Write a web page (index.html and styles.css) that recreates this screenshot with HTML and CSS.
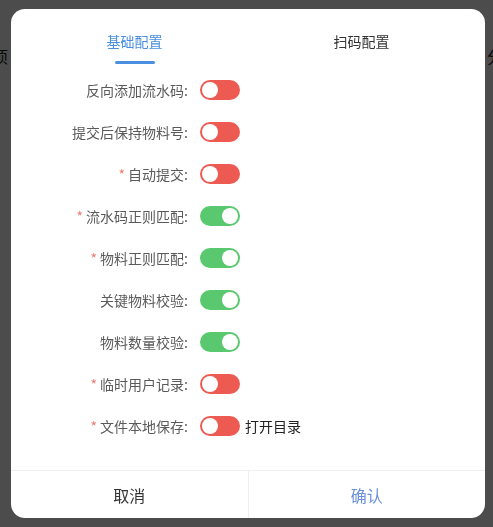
FILE: index.html
```html
<!DOCTYPE html>
<html lang="zh-CN">
<head>
    <meta charset="UTF-8">
    <meta name="viewport" content="width=device-width, initial-scale=1.0">
    <title>配置</title>
    <link rel="stylesheet" href="styles.css">
</head>
<body>
    <div class="page-behind">
        <span class="behind-left">项</span>
        <span class="behind-right">分</span>
    </div>

    <div class="overlay">
        <div class="dialog">
            <div class="tabs">
                <div class="tab active">
                    <span>基础配置</span>
                    <i class="tab-line"></i>
                </div>
                <div class="tab">
                    <span>扫码配置</span>
                    <i class="tab-line"></i>
                </div>
            </div>

            <div class="form">
                <div class="row">
                    <label class="row-label">反向添加流水码:</label>
                    <span class="switch off"><i class="knob"></i></span>
                </div>
                <div class="row">
                    <label class="row-label">提交后保持物料号:</label>
                    <span class="switch off"><i class="knob"></i></span>
                </div>
                <div class="row">
                    <label class="row-label"><em class="req">*</em>自动提交:</label>
                    <span class="switch off"><i class="knob"></i></span>
                </div>
                <div class="row">
                    <label class="row-label"><em class="req">*</em>流水码正则匹配:</label>
                    <span class="switch on"><i class="knob"></i></span>
                </div>
                <div class="row">
                    <label class="row-label"><em class="req">*</em>物料正则匹配:</label>
                    <span class="switch on"><i class="knob"></i></span>
                </div>
                <div class="row">
                    <label class="row-label">关键物料校验:</label>
                    <span class="switch on"><i class="knob"></i></span>
                </div>
                <div class="row">
                    <label class="row-label">物料数量校验:</label>
                    <span class="switch on"><i class="knob"></i></span>
                </div>
                <div class="row">
                    <label class="row-label"><em class="req">*</em>临时用户记录:</label>
                    <span class="switch off"><i class="knob"></i></span>
                </div>
                <div class="row">
                    <label class="row-label"><em class="req">*</em>文件本地保存:</label>
                    <span class="switch off"><i class="knob"></i></span>
                    <span class="open-dir">打开目录</span>
                </div>
            </div>

            <div class="footer">
                <button class="btn">取消</button>
                <button class="btn primary">确认</button>
            </div>
        </div>
    </div>
</body>
</html>
```

FILE: styles.css
```css
html, body {
    margin: 0;
    height: 100%;
}

body {
    font-family: "Noto Sans CJK SC", "Noto Sans", sans-serif;
    background-color: #ffffff;
    overflow: hidden;
}

.page-behind {
    display: flex;
    justify-content: space-between;
    padding-top: 44px;
    font-size: 16px;
    color: #222;
}

.behind-left {
    margin-left: -8px;
}

.behind-right {
    margin-right: -10px;
}

/* dimmed backdrop with the dialog on top */
.overlay {
    position: fixed;
    inset: 0;
    background-color: rgba(0, 0, 0, 0.7);
    padding: 9px 8px 9px 11px;
    display: flex;
}

.dialog {
    flex: 1;
    background-color: #ffffff;
    border-radius: 14px;
    display: flex;
    flex-direction: column;
    overflow: hidden;
}

/* Tabs */
.tabs {
    display: flex;
    padding: 0 10px;
}

.tab {
    flex: 1;
    display: flex;
    flex-direction: column;
    align-items: center;
    padding-top: 22px;
    font-size: 14px;
    line-height: 20px;
    color: #333;
}

.tab-line {
    display: block;
    width: 40px;
    height: 3px;
    margin-top: 10px;
    border-radius: 2px;
}

.tab.active {
    color: #4a8fe0;
}

.tab.active .tab-line {
    background-color: #4a8fe0;
}

/* Form rows */
.form {
    flex: 1;
    margin-top: 5px;
}

.row {
    display: flex;
    align-items: center;
    height: 42px;
}

.row-label {
    width: 177px;
    text-align: right;
    font-size: 14px;
    color: #5a5a5a;
}

.req {
    font-style: normal;
    color: #ee7a72;
    margin-right: 3px;
}

.switch {
    position: relative;
    display: block;
    width: 40px;
    height: 20px;
    margin-left: 12px;
    border-radius: 10px;
}

.switch.off {
    background-color: #ec5a52;
}

.switch.on {
    background-color: #5ac86f;
}

.knob {
    position: absolute;
    top: 2px;
    width: 16px;
    height: 16px;
    border-radius: 50%;
    background-color: #ffffff;
}

.switch.off .knob {
    left: 2px;
}

.switch.on .knob {
    right: 2px;
}

.open-dir {
    margin-left: 5px;
    font-size: 14px;
    color: #222;
}

/* Footer */
.footer {
    display: flex;
    height: 47px;
    border-top: 1px solid #f0f0f0;
}

.btn {
    flex: 1;
    border: none;
    background: none;
    font-family: inherit;
    font-size: 16px;
    color: #333;
    padding: 0;
}

.btn.primary {
    color: #6a8fdc;
    border-left: 1px solid #f0f0f0;
}
```
